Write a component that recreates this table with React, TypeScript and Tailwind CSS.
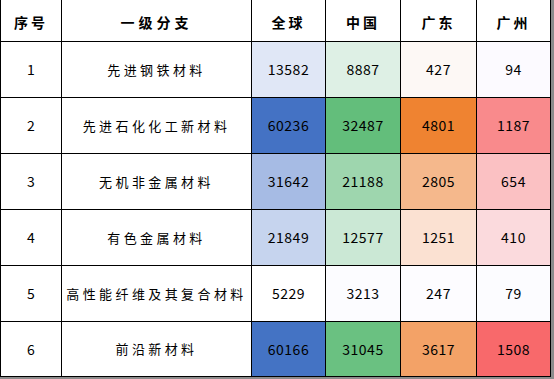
const rows = [
  { no: "1", name: "先进钢铁材料", cells: [["13582", "bg-[#e0e7f6]"], ["8887", "bg-[#def0e5]"], ["427", "bg-[#fdf8f5]"], ["94", "bg-[#fcfaff]"]] },
  { no: "2", name: "先进石化化工新材料", cells: [["60236", "bg-[#4472c4]"], ["32487", "bg-[#63be7b]"], ["4801", "bg-[#ef8331]"], ["1187", "bg-[#f98a8c]"]] },
  { no: "3", name: "无机非金属材料", cells: [["31642", "bg-[#a6bbe4]"], ["21188", "bg-[#9ed6ae]"], ["2805", "bg-[#f5b88c]"], ["654", "bg-[#fbc1c3]"]] },
  { no: "4", name: "有色金属材料", cells: [["21849", "bg-[#c6d4ee]"], ["12577", "bg-[#cbe8d5]"], ["1251", "bg-[#fbe1d2]"], ["410", "bg-[#fbdadd]"]] },
  { no: "5", name: "高性能纤维及其复合材料", cells: [["5229", "bg-[#ffffff]"], ["3213", "bg-[#fcfcff]"], ["247", "bg-[#fdfcff]"], ["79", "bg-[#fcfcff]"]] },
  { no: "6", name: "前沿新材料", cells: [["60166", "bg-[#4473c4]"], ["31045", "bg-[#6ac181]"], ["3617", "bg-[#f3a267]"], ["1508", "bg-[#f8696b]"]] },
];

const headers = ["序号", "一级分支", "全球", "中国", "广东", "广州"];

export default function App() {
  return (
    <div className="w-[554px] h-[379px] bg-white font-['Noto_Sans_CJK_SC',sans-serif] text-black">
      <div className="inline-block border-r-[3px] border-b-2 border-[#8c8c8c]">
        <div className="grid grid-cols-[60px_189px_73px_74px_75px_73px] grid-rows-[41px_repeat(5,55px)_54px] gap-px bg-black px-px pb-px">
          {headers.map((h, i) => (
            <div
              key={h}
              className={`flex items-center justify-center bg-white pt-1 text-[14px] font-bold ${i === 1 ? "tracking-[4px]" : "tracking-[3px]"}`}
            >
              {h}
            </div>
          ))}
          {rows.map((r) => (
            <div key={r.no} className="contents">
              <div className="flex items-center justify-center bg-white text-[14px]">{r.no}</div>
              <div className="flex items-center justify-center bg-white text-[13px] tracking-[3.4px]">{r.name}</div>
              {r.cells.map(([v, bg]) => (
                <div key={v} className={`flex items-center justify-center text-[14px] tracking-[0.5px] ${bg}`}>
                  {v}
                </div>
              ))}
            </div>
          ))}
        </div>
      </div>
    </div>
  );
}
